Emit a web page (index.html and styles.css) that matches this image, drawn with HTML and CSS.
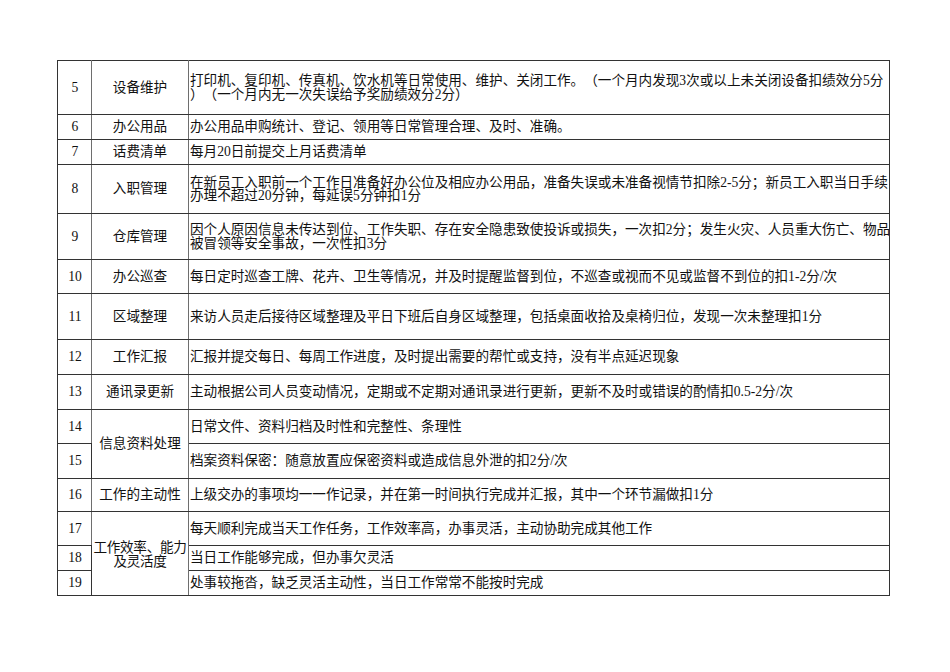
FILE: index.html
```html
<!DOCTYPE html>
<html lang="zh-CN">
<head>
<meta charset="utf-8">
<title>考核表</title>
<link rel="stylesheet" href="styles.css">
</head>
<body>
<table class="sheet">
  <colgroup><col class="c-no"><col class="c-item"><col class="c-desc"></colgroup>
  <tbody>
    <tr class="h54"><td class="no">5</td><td class="item">设备维护</td><td class="desc">打印机、复印机、传真机、饮水机等日常使用、维护、关闭工作。（一个月内发现3次或以上未关闭设备扣绩效分5分<br>）（一个月内无一次失误给予奖励绩效分2分）</td></tr>
    <tr class="h25"><td class="no">6</td><td class="item">办公用品</td><td class="desc">办公用品申购统计、登记、领用等日常管理合理、及时、准确。</td></tr>
    <tr class="h25"><td class="no">7</td><td class="item">话费清单</td><td class="desc">每月20日前提交上月话费清单</td></tr>
    <tr class="h49"><td class="no">8</td><td class="item">入职管理</td><td class="desc">在新员工入职前一个工作日准备好办公位及相应办公用品，准备失误或未准备视情节扣除2-5分；新员工入职当日手续<br>办理不超过20分钟，每延误5分钟扣1分</td></tr>
    <tr class="h46"><td class="no">9</td><td class="item">仓库管理</td><td class="desc">因个人原因信息未传达到位、工作失职、存在安全隐患致使投诉或损失，一次扣2分；发生火灾、人员重大伤亡、物品<br>被冒领等安全事故，一次性扣3分</td></tr>
    <tr class="h34"><td class="no">10</td><td class="item">办公巡查</td><td class="desc">每日定时巡查工牌、花卉、卫生等情况，并及时提醒监督到位，不巡查或视而不见或监督不到位的扣1-2分/次</td></tr>
    <tr class="h46"><td class="no">11</td><td class="item">区域整理</td><td class="desc">来访人员走后接待区域整理及平日下班后自身区域整理，包括桌面收拾及桌椅归位，发现一次未整理扣1分</td></tr>
    <tr class="h35"><td class="no">12</td><td class="item">工作汇报</td><td class="desc">汇报并提交每日、每周工作进度，及时提出需要的帮忙或支持，没有半点延迟现象</td></tr>
    <tr class="h35"><td class="no">13</td><td class="item">通讯录更新</td><td class="desc">主动根据公司人员变动情况，定期或不定期对通讯录进行更新，更新不及时或错误的酌情扣0.5-2分/次</td></tr>
    <tr class="h34"><td class="no">14</td><td class="item" rowspan="2">信息资料处理</td><td class="desc">日常文件、资料归档及时性和完整性、条理性</td></tr>
    <tr class="h35"><td class="no">15</td><td class="desc">档案资料保密：随意放置应保密资料或造成信息外泄的扣2分/次</td></tr>
    <tr class="h33"><td class="no">16</td><td class="item">工作的主动性</td><td class="desc">上级交办的事项均一一作记录，并在第一时间执行完成并汇报，其中一个环节漏做扣1分</td></tr>
    <tr class="h34"><td class="no">17</td><td class="item tight" rowspan="3">工作效率、能力<br>及灵活度</td><td class="desc">每天顺利完成当天工作任务，工作效率高，办事灵活，主动协助完成其他工作</td></tr>
    <tr class="h25"><td class="no">18</td><td class="desc">当日工作能够完成，但办事欠灵活</td></tr>
    <tr class="h25"><td class="no">19</td><td class="desc">处事较拖沓，缺乏灵活主动性，当日工作常常不能按时完成</td></tr>
  </tbody>
</table>
</body>
</html>
```

FILE: styles.css
```css
html, body {
  margin: 0;
  padding: 0;
  background: #ffffff;
}

body {
  padding: 60px 0 0 57px;
  font-family: "Liberation Serif", "Noto Sans CJK SC", serif;
  font-size: 13.6px;
  color: #111111;
  text-spacing-trim: space-all;
}

.sheet {
  border-collapse: collapse;
  table-layout: fixed;
  width: 832px;
  border: 1px solid #222222;
}

.c-no { width: 34px; }
.c-item { width: 97px; }
.c-desc { width: 701px; }

.sheet td {
  border: 1px solid #333333;
  padding: 0;
  vertical-align: middle;
  line-height: 13.5px;
  white-space: nowrap;
  overflow: hidden;
}

.sheet td.no,
.sheet td.item {
  border-right-color: #6e6e6e;
  text-align: center;
}

.sheet td.no {
  padding-left: 1px;
}

.sheet td.desc {
  padding-left: 1px;
  text-align: left;
}

.sheet td.tight {
  letter-spacing: -0.3px;
  padding-top: 2px;
}

.h25 { height: 25px; }
.h33 { height: 33px; }
.h34 { height: 34px; }
.h35 { height: 35px; }
.h46 { height: 46px; }
.h49 { height: 49px; }
.h54 { height: 54px; }
```
